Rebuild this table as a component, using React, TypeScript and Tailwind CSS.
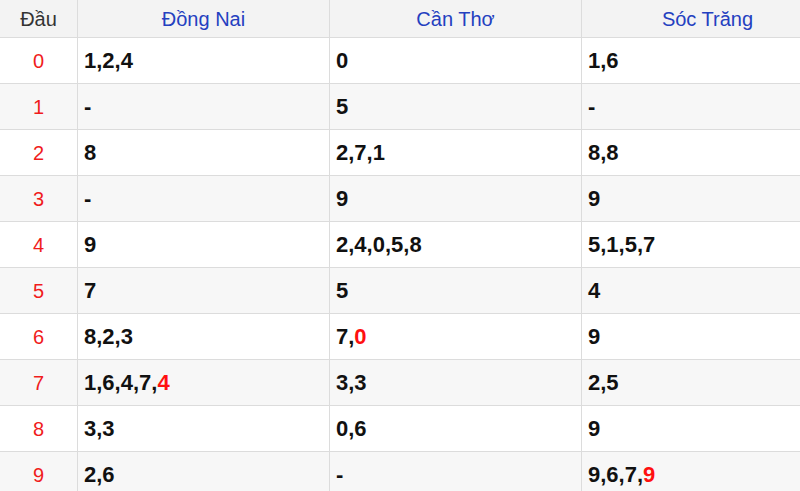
const rows: { d: string; cells: [string, string?][] }[] = [
  { d: "0", cells: [["1,2,4"], ["0"], ["1,6"]] },
  { d: "1", cells: [["-"], ["5"], ["-"]] },
  { d: "2", cells: [["8"], ["2,7,1"], ["8,8"]] },
  { d: "3", cells: [["-"], ["9"], ["9"]] },
  { d: "4", cells: [["9"], ["2,4,0,5,8"], ["5,1,5,7"]] },
  { d: "5", cells: [["7"], ["5"], ["4"]] },
  { d: "6", cells: [["8,2,3"], ["7,", "0"], ["9"]] },
  { d: "7", cells: [["1,6,4,7,", "4"], ["3,3"], ["2,5"]] },
  { d: "8", cells: [["3,3"], ["0,6"], ["9"]] },
  { d: "9", cells: [["2,6"], ["-"], ["9,6,7,", "9"]] },
];

const heads = ["Đồng Nai", "Cần Thơ", "Sóc Trăng"];

export default function App() {
  return (
    <div className="w-[800px] h-[491px] overflow-hidden bg-white font-['Liberation_Sans',Arial,sans-serif]">
      <div className="w-[834px]">
        <div className="grid grid-cols-[78px_252px_252px_252px] h-[38px] bg-[#f3f3f3] border-b border-[#dcdcdc] text-[20px]">
          <div className="flex items-center justify-center text-[#333] border-r border-[#dcdcdc]">Đầu</div>
          {heads.map((h) => (
            <div key={h} className="flex items-center justify-center text-[#2440c0] border-r border-[#dcdcdc]">
              {h}
            </div>
          ))}
        </div>
        {rows.map((r, i) => (
          <div
            key={r.d}
            className={`grid grid-cols-[78px_252px_252px_252px] h-[46px] border-b border-[#dcdcdc] ${
              i % 2 === 1 ? "bg-[#f7f7f7]" : "bg-white"
            }`}
          >
            <div className="flex items-center justify-center text-[20px] text-[#f01c1c] border-r border-[#dcdcdc]">
              {r.d}
            </div>
            {r.cells.map((c, j) => (
              <div
                key={j}
                className="flex items-center pl-[6px] text-[22px] font-bold text-[#111] border-r border-[#dcdcdc]"
              >
                {c[0]}
                {c[1] && <span className="text-[#ff1010]">{c[1]}</span>}
              </div>
            ))}
          </div>
        ))}
      </div>
    </div>
  );
}
